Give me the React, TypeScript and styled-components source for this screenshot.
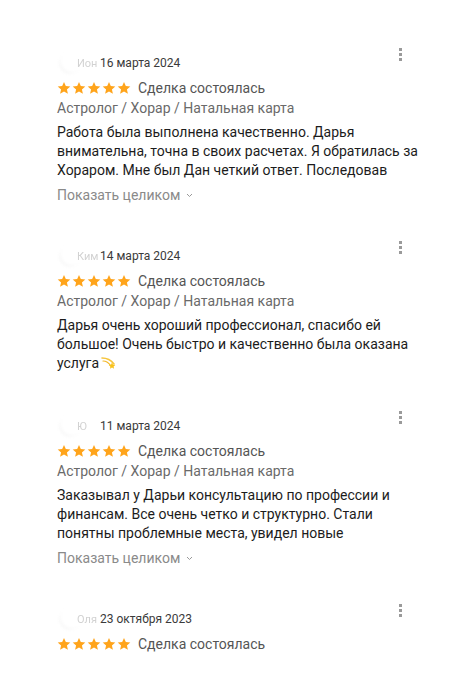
import React from "react";
import styled, { createGlobalStyle } from "styled-components";

interface Review {
  id: number;
  name: string;
  date: string;
  category?: string;
  lines: string[];
  clipped: boolean;
  emoji?: boolean;
}

// lines are kept as they wrap in the card so the text breaks at the same words
const reviews: Review[] = [
  {
    id: 1,
    name: "Ион",
    date: "16 марта 2024",
    category: "Астролог / Хорар / Натальная карта",
    lines: [
      "Работа была выполнена качественно. Дарья",
      "внимательна, точна в своих расчетах. Я обратилась за",
      "Хораром. Мне был Дан четкий ответ. Последовав",
    ],
    clipped: true,
  },
  {
    id: 2,
    name: "Ким",
    date: "14 марта 2024",
    category: "Астролог / Хорар / Натальная карта",
    lines: [
      "Дарья очень хороший профессионал, спасибо ей",
      "большое! Очень быстро и качественно была оказана",
      "услуга",
    ],
    clipped: false,
    emoji: true,
  },
  {
    id: 3,
    name: "Ю",
    date: "11 марта 2024",
    category: "Астролог / Хорар / Натальная карта",
    lines: [
      "Заказывал у Дарьи консультацию по профессии и",
      "финансам. Все очень четко и структурно. Стали",
      "понятны проблемные места, увидел новые",
    ],
    clipped: true,
  },
  {
    id: 4,
    name: "Оля",
    date: "23 октября 2023",
    lines: [],
    clipped: false,
  },
];

const Star: React.FC = () => (
  <svg width="14" height="14" viewBox="0 0 24 24">
    <path
      d="M12 1.5l3.1 7.1 7.7.7-5.8 5.1 1.7 7.6L12 18l-6.7 4 1.7-7.6-5.8-5.1 7.7-.7z"
      fill="#FFA41B"
    />
  </svg>
);

const Dizzy: React.FC = () => (
  <svg width="17" height="15" viewBox="0 0 17 15">
    <path
      d="M2 3c4 0 9 2 12 6"
      stroke="#F6C53D"
      strokeWidth="1.6"
      fill="none"
      strokeLinecap="round"
    />
    <path
      d="M3 6c3 0 6 2 8 5"
      stroke="#F3B623"
      strokeWidth="1.2"
      fill="none"
      strokeLinecap="round"
    />
    <path
      d="M12 7.5l1 2.2 2.3.3-1.7 1.5.5 2.3-2.1-1.2-2 1.2.4-2.3-1.7-1.5 2.3-.3z"
      fill="#F8C21C"
    />
  </svg>
);

const App: React.FC = () => {
  return (
    <>
      <GlobalStyle />
      <Page>
        {reviews.map((r) => (
          <Card key={r.id}>
            <Header>
              <Author>
                <Avatar />
                <Name>{r.name}</Name>
              </Author>
              <DateText>{r.date}</DateText>
              <Menu>
                <Dot />
                <Dot />
                <Dot />
              </Menu>
            </Header>
            <RatingRow>
              <Stars>
                {[0, 1, 2, 3, 4].map((i) => (
                  <Star key={i} />
                ))}
              </Stars>
              <Status>Сделка состоялась</Status>
            </RatingRow>
            {r.category && <Category>{r.category}</Category>}
            {r.lines.length > 0 && (
              <Body>
                {r.lines.map((line, i) => (
                  <Line key={i}>
                    {line}
                    {r.emoji && i === r.lines.length - 1 && (
                      <EmojiWrap>
                        <Dizzy />
                      </EmojiWrap>
                    )}
                  </Line>
                ))}
              </Body>
            )}
            {r.clipped && (
              <ShowMore>
                Показать целиком
                <svg width="7" height="5" viewBox="0 0 7 5">
                  <path
                    d="M1 1l2.5 2.5L6 1"
                    stroke="#999"
                    strokeWidth="1"
                    fill="none"
                  />
                </svg>
              </ShowMore>
            )}
          </Card>
        ))}
      </Page>
    </>
  );
};

export default App;

const GlobalStyle = createGlobalStyle`
  html, body {
    margin: 0;
    padding: 0;
    background: #ffffff;
  }
  body {
    font-family: Roboto, "Noto Sans", sans-serif;
    -webkit-font-smoothing: antialiased;
  }
`;

const Page = styled.div`
  width: 472px;
  height: 675px;
  overflow: hidden;
  padding-top: 52px;
  box-sizing: border-box;
  display: flex;
  flex-direction: column;
  gap: 40px;
`;

const Card = styled.div`
  display: flex;
  flex-direction: column;
  padding: 0 57px;
`;

const Header = styled.div`
  display: flex;
  align-items: center;
  height: 22px;
`;

const Author = styled.div`
  display: flex;
  align-items: center;
  width: 43px;
  flex-shrink: 0;
`;

const Avatar = styled.div`
  width: 22px;
  height: 22px;
  border-radius: 50%;
  margin-left: 2px;
  background: radial-gradient(circle at 62% 38%, #ffffff 55%, #ececec 100%);
  filter: blur(1px);
`;

const Name = styled.span`
  font-size: 11px;
  color: #d2d2d2;
  filter: blur(0.7px);
  margin-left: -4px;
  white-space: nowrap;
`;

const DateText = styled.span`
  font-size: 12px;
  color: #3a3a3a;
  flex: 1;
`;

const Menu = styled.div`
  display: flex;
  flex-direction: column;
  gap: 2px;
  align-self: flex-start;
  margin-top: -4px;
  margin-right: 13px;
`;

const Dot = styled.span`
  width: 3px;
  height: 3px;
  background: #9a9a9a;
`;

const RatingRow = styled.div`
  display: flex;
  align-items: center;
  margin-top: 4px;
  height: 20px;
`;

const Stars = styled.div`
  display: flex;
  gap: 1px;
  margin-right: 7px;
`;

const Status = styled.span`
  font-size: 14px;
  color: #555555;
`;

const Category = styled.div`
  font-size: 14px;
  line-height: 20px;
  color: #6a6a6a;
`;

const Body = styled.div`
  margin-top: 5px;
  display: flex;
  flex-direction: column;
`;

const Line = styled.div`
  font-size: 14px;
  line-height: 19px;
  color: #1c1c1c;
  white-space: nowrap;
`;

const EmojiWrap = styled.span`
  display: inline-block;
  vertical-align: -2px;
  margin-left: 1px;
`;

const ShowMore = styled.div`
  margin-top: 5px;
  font-size: 14px;
  line-height: 20px;
  color: #8a8a8a;
  display: flex;
  align-items: center;
  gap: 6px;
`;
